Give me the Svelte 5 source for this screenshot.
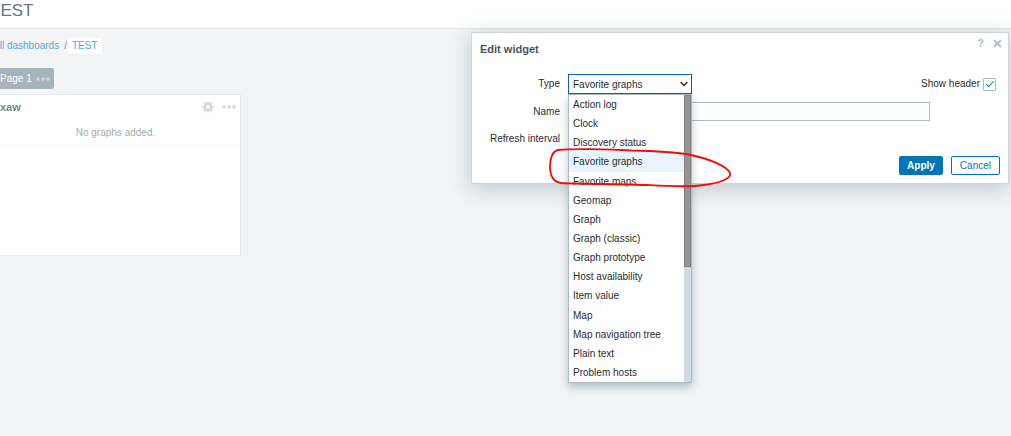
<script lang="ts">
  const types = [
    'Action log',
    'Clock',
    'Discovery status',
    'Favorite graphs',
    'Favorite maps',
    'Geomap',
    'Graph',
    'Graph (classic)',
    'Graph prototype',
    'Host availability',
    'Item value',
    'Map',
    'Map navigation tree',
    'Plain text',
    'Problem hosts',
  ];

  let type = $state('Favorite graphs');
  let name = $state('');
  let showHeader = $state(true);

  // scrollbar thumb, share of the list height
  const thumb = 60;
</script>

{#snippet dots()}
  <svg class="dots" viewBox="0 0 14 4" width="14" height="4" aria-hidden="true">
    <circle cx="2" cy="2" r="1.8" />
    <circle cx="7" cy="2" r="1.8" />
    <circle cx="12" cy="2" r="1.8" />
  </svg>
{/snippet}

<div class="page">
  <header>
    <h1>TEST</h1>
  </header>

  <main>
    <nav class="breadcrumbs">
      <a href="#dashboards">All dashboards</a>
      <span class="sep">/</span>
      <a class="current" href="#test">TEST</a>
    </nav>

    <button class="tab" type="button">Page 1 {@render dots()}</button>

    <section class="widget">
      <div class="widget-head">
        <h4>xaw</h4>
        <button class="icon" type="button" aria-label="Edit">
          <svg viewBox="0 0 12 12" width="12" height="12">
            <circle cx="6" cy="6" r="3.2" fill="none" stroke="currentColor" stroke-width="2.2" />
            <path d="M6 .4V2.4M6 9.6v2M.4 6h2M9.6 6h2M2 2l1.5 1.5M8.5 8.5L10 10M10 2L8.500 3.500M3.500 8.500L2 10" stroke="currentColor" stroke-width="2" />
          </svg>
        </button>
        <button class="icon" type="button" aria-label="Actions">{@render dots()}</button>
      </div>
      <p class="empty">No graphs added.</p>
    </section>
  </main>
</div>

<div class="dialog" role="dialog" aria-labelledby="dialog-title">
  <div class="dialog-controls">
    <button class="help" type="button" aria-label="Help">?</button>
    <button type="button" aria-label="Close">
      <svg viewBox="0 0 9 9" width="9" height="9">
        <path d="M1 1l7 7M8 1L1 8" stroke="currentColor" stroke-width="2" />
      </svg>
    </button>
  </div>
  <h4 id="dialog-title">Edit widget</h4>

  <form onsubmit={(e) => e.preventDefault()}>
    <label for="type">Type</label>
    <div class="row">
      <div class="type-select">
        <select id="type" bind:value={type}>
          {#each types as t}
            <option value={t}>{t}</option>
          {/each}
        </select>
        <svg class="chevron" viewBox="0 0 8 6" width="8" height="6" aria-hidden="true">
          <path d="M.7 1L4 4.4 7.3 1" fill="none" stroke="currentColor" stroke-width="1.4" />
        </svg>
        <div class="dropdown">
          <ul role="listbox" aria-label="Type">
            {#each types as t}
              <li role="option" class:selected={t === type} aria-selected={t === type}>{t}</li>
            {/each}
          </ul>
          <div class="track">
            <div class="thumb" style:height="{thumb}%"></div>
          </div>
        </div>
      </div>
      <label class="show-header">
        Show header
        <input type="checkbox" bind:checked={showHeader} />
      </label>
    </div>

    <label for="name">Name</label>
    <input id="name" class="name" type="text" bind:value={name} />

    <span class="label">Refresh interval</span>
  </form>

  <div class="dialog-footer">
    <button class="primary" type="button">Apply</button>
    <button type="button">Cancel</button>
  </div>

  <svg class="marker" viewBox="0 0 186 44" width="186" height="44" aria-hidden="true">
    <path d="M11 4C25 2.500 60 3 84 4.500C110 5 130 6.500 144 9C162 13 180 20 183 27C185 33 172 37 157 39C142 41.500 118 40 100 39C76 38 38 38 14 37C6 36 3 30 3 20C3 12 6 5 11 4Z" />
  </svg>
</div>

<style>
  :global(body) {
    background: #f2f4f5;
    color: #1f2c33;
    font-family: 'Liberation Sans', Arial, sans-serif;
    font-size: 10px;
    line-height: 12px;
    overflow: hidden;
  }

  h1,
  h4,
  p,
  ul {
    margin: 0;
    padding: 0;
  }

  button,
  input,
  select {
    box-sizing: border-box;
    margin: 0;
    font: inherit;
  }

  /* the page runs past the left window edge */
  .page {
    margin-left: -10px;
  }

  header {
    padding: 1px 0 7px;
    background: #fff;
    border-bottom: 1px solid #e5e8eb;
  }

  h1 {
    font-size: 17px;
    font-weight: 400;
    line-height: 20px;
    color: #66757e;
  }

  .breadcrumbs {
    display: flex;
    align-items: center;
    padding: 9px 0 14px 3px;
  }

  .breadcrumbs a {
    color: #5aa7d6;
    text-decoration: none;
  }

  .sep {
    padding: 0 1px 0 5px;
    color: #8c999f;
  }

  .breadcrumbs .current {
    padding: 2px 4px;
    background: #fff;
  }

  .tab {
    display: flex;
    align-items: center;
    gap: 4px;
    height: 21px;
    padding: 0 4px 0 10px;
    border: 0;
    border-radius: 2px;
    background: #a5b3bb;
    color: #fff;
  }

  .tab .dots {
    color: #d0d8dc;
  }

  .dots {
    display: block;
    fill: currentColor;
  }

  .widget {
    box-sizing: border-box;
    width: 251px;
    min-height: 162px;
    margin-top: 5px;
    background: #fff;
    border: 1px solid #e7eaec;
  }

  .widget-head {
    display: flex;
    align-items: center;
    gap: 8px;
    height: 24px;
    padding: 0 4px 0 9px;
  }

  .widget-head h4 {
    flex: 1;
    font-size: 11px;
    color: #75848c;
  }

  .icon {
    padding: 0;
    border: 0;
    background: none;
    color: #d0d8dd;
  }

  .icon svg {
    display: block;
  }

  .empty {
    padding: 8px 0 6px;
    border-bottom: 1px solid #f2f3f4;
    color: #a3acb1;
    text-align: center;
  }

  .dialog {
    position: absolute;
    top: 32px;
    right: 2px;
    box-sizing: border-box;
    width: 538px;
    padding: 10px 8px 8px;
    background: #fff;
    border: 1px solid #ccd5d9;
    box-shadow: 0 4px 20px rgba(70, 95, 110, 0.3);
  }

  .dialog h4 {
    font-size: 11px;
    color: #45565f;
  }

  .dialog-controls {
    position: absolute;
    top: 4px;
    right: 6px;
    display: flex;
    align-items: center;
    gap: 9px;
  }

  .dialog-controls button {
    padding: 0;
    border: 0;
    background: none;
    color: #b4bfc5;
  }

  .dialog-controls svg {
    display: block;
  }

  .dialog-controls .help {
    font-size: 11px;
    font-weight: 700;
  }

  form {
    display: grid;
    grid-template-columns: 80px 1fr;
    column-gap: 8px;
    row-gap: 8px;
    align-items: center;
    padding-top: 19px;
  }

  form > label,
  .label {
    text-align: right;
    white-space: nowrap;
  }

  .row {
    display: flex;
    align-items: center;
    justify-content: space-between;
    padding-right: 4px;
  }

  .type-select {
    position: relative;
    width: 124px;
  }

  select {
    display: block;
    appearance: none;
    width: 100%;
    height: 20px;
    padding: 1px 4px 0;
    background: #fff;
    border: 1px solid #0a66a0;
    border-radius: 0;
    color: inherit;
  }

  .chevron {
    position: absolute;
    top: 7px;
    right: 4px;
  }

  .dropdown {
    position: absolute;
    top: 100%;
    left: 0;
    right: 0;
    z-index: 1;
    display: flex;
    height: 287px;
    background: #fff;
    border: 1px solid #acbbc2;
    box-shadow: 0 4px 8px rgba(60, 90, 105, 0.35);
  }

  ul {
    flex: 1;
    display: flex;
    flex-direction: column;
    list-style: none;
  }

  li {
    flex: 1;
    padding-left: 4px;
    line-height: 19px;
    white-space: nowrap;
  }

  .selected {
    background: #e8f5ff;
  }

  .track {
    width: 7px;
    background: #d2d9e0;
  }

  .thumb {
    box-sizing: border-box;
    background: #949494;
    border: 1px solid #828282;
  }

  .show-header {
    display: flex;
    align-items: center;
    gap: 3px;
  }

  input[type='checkbox'] {
    appearance: none;
    display: grid;
    place-items: center;
    width: 13px;
    height: 13px;
    border: 1px solid #acbbc2;
    border-radius: 1px;
    background: #fff;
  }

  input[type='checkbox']:checked::before {
    content: '';
    width: 8px;
    height: 4px;
    box-sizing: border-box;
    border: solid #0275b8;
    border-width: 0 0 1px 1px;
    transform: translateY(-1px) rotate(-45deg);
  }

  .name {
    width: 362px;
    height: 19px;
    padding: 0 4px;
    border: 1px solid #acbbc2;
  }

  .label {
    padding: 4px 0;
  }

  .dialog-footer {
    display: flex;
    justify-content: flex-end;
    gap: 8px;
    padding-top: 7px;
  }

  .dialog-footer button {
    height: 19px;
    padding: 0 8px;
    background: #fff;
    border: 1px solid #0275b8;
    border-radius: 2px;
    color: #0275b8;
  }

  .dialog-footer .primary {
    padding: 0 7px;
    background: #0275b8;
    color: #fff;
    font-weight: 700;
  }

  .marker {
    position: absolute;
    top: 113px;
    left: 75px;
    z-index: 2;
    pointer-events: none;
  }

  .marker path {
    fill: none;
    stroke: #f00a0a;
    stroke-width: 1.8;
    stroke-linejoin: round;
  }
</style>
